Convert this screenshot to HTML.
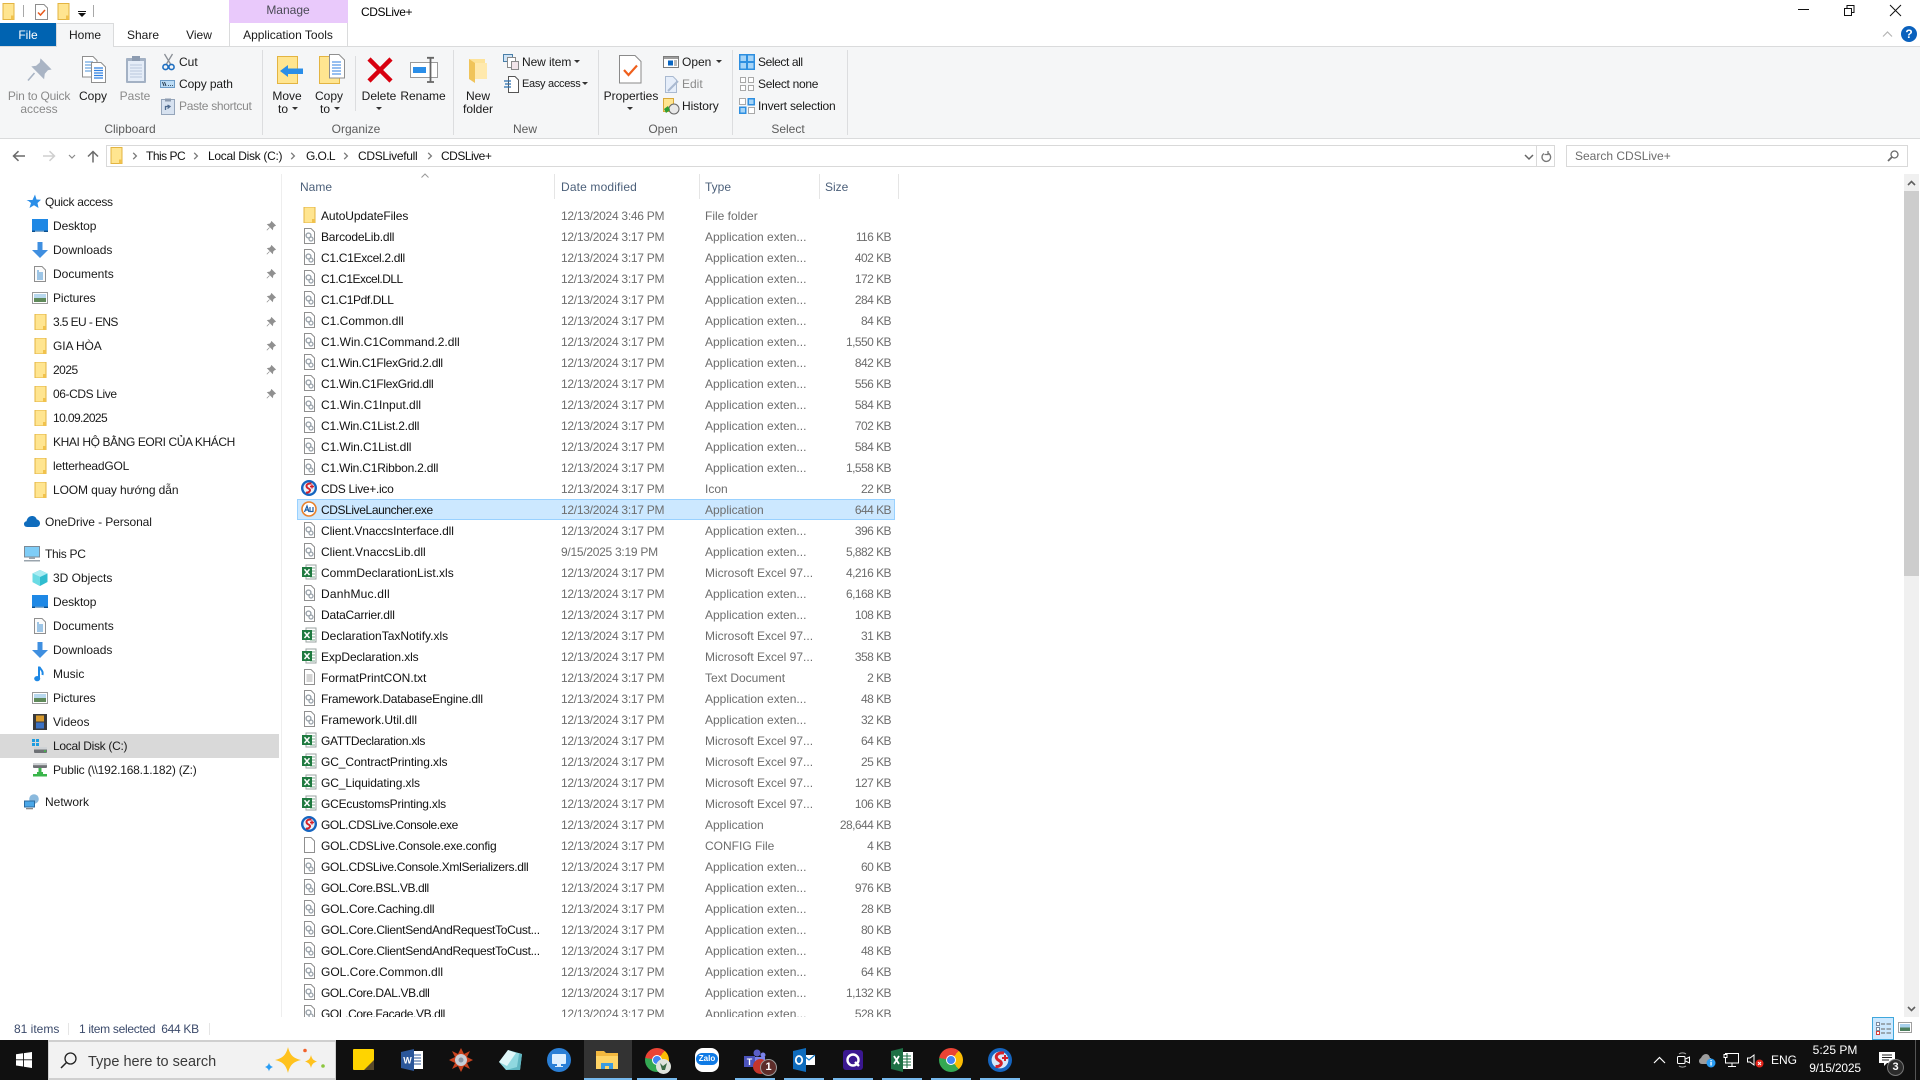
<!DOCTYPE html>
<html lang="en"><head><meta charset="utf-8"><title>CDSLive+</title>
<style>
*{box-sizing:border-box}
html,body{margin:0;padding:0;width:1920px;height:1080px;overflow:hidden;background:#fff;font:12px "Liberation Sans","Noto Sans CJK SC",sans-serif;color:#1a1a1a}
.t{position:absolute;white-space:nowrap;line-height:16px;height:16px}
.c{transform:translateX(-50%)}
.g{color:#8a8a8a}
.a{position:absolute}
.l{color:#5c5c5c}
svg{position:absolute;overflow:visible}
#rows{position:absolute;left:297px;top:205px;width:598px;height:812px;overflow:hidden}
.r{position:relative;height:21px;line-height:21px;white-space:nowrap}
.r.sel{background:#cce8ff;box-shadow:inset 0 0 0 1px #99d1ff}
.r svg{left:4px;top:2px;width:16px;height:16px}
.r span{position:absolute;top:1px;color:#6d6d6d}
.r .n{left:24px;color:#111}
.r .d{left:264px;letter-spacing:-.27px}
.r .y{left:408px}
.r .z{right:4px;letter-spacing:-.55px}
.nv{position:absolute;left:53px;line-height:16px;height:16px;white-space:nowrap;color:#1a1a1a}
.nv.root{left:45px}
.hs{position:absolute;top:174px;width:1px;height:25px;background:#e5e5e5}
.sep{position:absolute;width:1px;background:#dcdddf}
.ub{position:absolute;top:1078px;height:2px;background:#76b9ed}
.tb{position:absolute;top:1048px;width:24px;height:24px}
.s1{letter-spacing:-.1px}.s2{letter-spacing:-.2px}.s3{letter-spacing:-.3px}.s4{letter-spacing:-.4px}.s5{letter-spacing:-.5px}.s6{letter-spacing:-.6px}.s7{letter-spacing:-.7px}.p2{letter-spacing:.2px}
</style></head><body>
<svg width="0" height="0" style="position:absolute">
<defs>
<symbol id="fold" viewBox="0 0 16 16"><rect x="3" y="0" width="11" height="16" fill="#ffe590" stroke="#e3b441"/><rect x="11" y="12" width="3" height="4" fill="#f1c24d"/></symbol>
<symbol id="dll" viewBox="0 0 16 16"><path d="M3.500.5H10L13.500 4V15.500H3.500Z" fill="#fff" stroke="#8f8f8f"/><circle cx="7.500" cy="7.500" r="2.400" fill="none" stroke="#9aa3ab" stroke-width="1.400"/><circle cx="10" cy="11" r="2" fill="none" stroke="#9aa3ab" stroke-width="1.300"/></symbol>
<symbol id="xls" viewBox="0 0 16 16"><rect x="5" y="1" width="10" height="14" fill="#fff" stroke="#9aa3a0"/><path d="M9 4h5M9 7h5M9 10h5M9 13h5" stroke="#7fae90"/><rect x="1" y="3" width="10" height="10" fill="#1f7a40"/><path d="M3.500 5.200 8.500 11M8.500 5.200 3.500 11" stroke="#fff" stroke-width="1.500"/></symbol>
<symbol id="txt" viewBox="0 0 16 16"><path d="M3.500.5H10L13.500 4V15.500H3.500Z" fill="#fff" stroke="#8f8f8f"/><path d="M5.500 6h6M5.500 8h6M5.500 10h6M5.500 12h6" stroke="#aaa"/></symbol>
<symbol id="blank" viewBox="0 0 16 16"><path d="M3.500.5H10L13.500 4V15.500H3.500Z" fill="#fff" stroke="#8f8f8f"/></symbol>
<symbol id="cds" viewBox="0 0 16 16"><circle cx="8" cy="8" r="8" fill="#1565c0"/><circle cx="8" cy="8" r="5.600" fill="#e9f2fb"/><path d="M10.500 3.500C5 3 4 7 7.500 8.500S8 13 5 12.500" fill="none" stroke="#d3222a" stroke-width="2"/><path d="M11 4.500v4M9 6.500h4" stroke="#d3222a" stroke-width="1.400"/></symbol>
<symbol id="pin" viewBox="0 0 10 10"><path d="M5.500.5 9.500 4.500 8.300 5 7 6.200 6.600 8.500 1.500 3.400 3.800 3 5 1.700ZM3.500 6.500 .8 9.200" fill="#909090" stroke="#909090" stroke-width=".7"/></symbol>
<symbol id="desk" viewBox="0 0 16 16"><rect x="0" y="1" width="16" height="13" fill="#1e88e5"/><rect x="0" y="12.600" width="16" height="1.400" fill="#0d4f8c"/><rect x="3" y="12.800" width="9" height=".8" fill="#d8ecfb"/></symbol>
<symbol id="down" viewBox="0 0 16 16"><path d="M5.500 0h5v8H16l-8 8-8-8h5.500Z" fill="#3f8fe0"/></symbol>
<symbol id="docs" viewBox="0 0 16 16"><path d="M2.500.5H10L13.500 4V15.500H2.500Z" fill="#fbfbfb" stroke="#8f8f8f"/><path d="M5 5h2M5 7h6M5 9h6M5 11h6M5 13h6" stroke="#3f8fd0"/></symbol>
<symbol id="pics" viewBox="0 0 16 16"><rect x=".5" y="2.500" width="15" height="11" fill="#fff" stroke="#9a9a9a"/><rect x="2" y="4" width="12" height="4" fill="#b8d8ee"/><rect x="2" y="8" width="12" height="4" fill="#5f8a5a"/></symbol>
<symbol id="music" viewBox="0 0 16 16"><path d="M7 .5V12" stroke="#1e88e5" stroke-width="2"/><ellipse cx="5.200" cy="12.600" rx="3" ry="2.600" fill="#1e88e5"/><path d="M7.500 1c1 3 4 3.500 3 8" fill="none" stroke="#1e88e5" stroke-width="2"/></symbol>
<symbol id="chev" viewBox="0 0 6 8"><path d="M1.200.8 4.400 4 1.200 7.200" fill="none" stroke="#7a7a7a" stroke-width="1.300"/></symbol>
</defs></svg>

<!-- title bar -->
<svg style="left:0;top:3px" width="16" height="17"><use href="#fold" width="16" height="17"/></svg>
<div class="a" style="left:23px;top:5px;width:1px;height:12px;background:#a8a8a8"></div>
<svg style="left:35px;top:4px" width="13" height="16" viewBox="0 0 13 16"><path d="M.5.500H9L12.500 4V15.500H.5Z" fill="#fff" stroke="#8e8e8e"/><path d="M3 8.500 5.500 11 10 6" fill="none" stroke="#e8591c" stroke-width="1.500"/></svg>
<svg style="left:55px;top:3px" width="16" height="17"><use href="#fold" width="16" height="17"/></svg>
<div class="a" style="left:78px;top:11px;width:8px;height:1px;background:#111"></div>
<div class="a" style="left:78px;top:13px;width:0;height:0;border:4px solid transparent;border-top:4px solid #111;border-bottom:0"></div>
<div class="a" style="left:93px;top:5px;width:1px;height:12px;background:#a8a8a8"></div>
<div class="a" style="left:229px;top:0;width:119px;height:23px;background:#e9c9fb"></div>
<div class="t c" style="left:288px;top:2px;color:#4a4a55">Manage</div>
<div class="t s4" style="left:361px;top:4px;color:#000">CDSLive+</div>
<svg style="left:1798px;top:9px" width="12" height="2"><rect width="11" height="1" fill="#111"/></svg>
<svg style="left:1844px;top:5px" width="12" height="12"><path d="M.5 3.500H7.500V10.500H.5ZM3 3V.5H10V7.500H7.500" fill="none" stroke="#111"/></svg>
<svg style="left:1889px;top:4px" width="13" height="13"><path d="M1 1 12 12M12 1 1 12" stroke="#111" stroke-width="1"/></svg>

<!-- tabs -->
<div class="a" style="left:0;top:23px;width:56px;height:23px;background:#0063b1"></div>
<div class="t c" style="left:28px;top:27px;color:#fff">File</div>
<div class="a" style="left:56px;top:23px;width:58px;height:24px;background:#f5f6f7;border:1px solid #dadbdc;border-bottom:0;z-index:2"></div>
<div class="t c" style="left:85px;top:27px;z-index:3">Home</div>
<div class="t c" style="left:143px;top:27px">Share</div>
<div class="t c" style="left:199px;top:27px">View</div>
<div class="a" style="left:229px;top:23px;width:119px;height:24px;background:#fff;border:1px solid #dadbdc;border-top:0;border-bottom:0"></div>
<div class="t c" style="left:288px;top:27px">Application Tools</div>
<svg style="left:1882px;top:31px" width="11" height="6"><path d="M1 5.500 5.500 1 10 5.500" fill="none" stroke="#b5b5b5" stroke-width="1.200"/></svg>
<div class="a" style="left:1901px;top:26px;width:16px;height:16px;border-radius:50%;background:#0a61bd;color:#fff;font:bold 12px/16px 'Liberation Sans',sans-serif;text-align:center">?</div>

<!-- ribbon -->
<div class="a" style="left:0;top:46px;width:1920px;height:93px;background:#f5f6f7;border-top:1px solid #dadbdc;border-bottom:1px solid #dadbdc;z-index:1"></div>
<div id="rb" style="position:absolute;left:0;top:0;z-index:4">
<div class="sep" style="left:262px;top:50px;height:85px"></div>
<div class="sep" style="left:453px;top:50px;height:85px"></div>
<div class="sep" style="left:598px;top:50px;height:85px"></div>
<div class="sep" style="left:732px;top:50px;height:85px"></div>
<div class="sep" style="left:847px;top:50px;height:85px"></div>
<div class="sep" style="left:355px;top:56px;height:55px"></div>

<svg style="left:27px;top:59px" width="24" height="23" viewBox="0 0 24 23"><path d="M14 1 23 10 20.500 10.500 17 14.500 16.500 18.500 6 8 9.500 7.500 13.500 4ZM7.500 14 1 21.500" fill="#a9b4c4" stroke="#a9b4c4" stroke-width="1.600"/></svg>
<div class="t c g s2" style="left:39px;top:88px">Pin to Quick</div>
<div class="t c g" style="left:39px;top:101px">access</div>

<svg style="left:81px;top:55px" width="26" height="29" viewBox="0 0 26 29"><path d="M1.500 1.500H12L16 5.500V22H1.500Z" fill="#fff" stroke="#8f8f8f"/><path d="M4 7h8M4 10h8M4 13h8M4 16h8" stroke="#4a90d9"/><path d="M10.500 7.500H20L24.500 12V27.500H10.500Z" fill="#fff" stroke="#8f8f8f"/><path d="M13 13h9M13 15.500h9M13 18h9M13 20.500h9M13 23h9" stroke="#2f7fe0" stroke-width="1.300"/></svg>
<div class="t c" style="left:93px;top:88px">Copy</div>

<svg style="left:125px;top:54px" width="22" height="30" viewBox="0 0 22 30"><rect x="1" y="4" width="20" height="25" rx="1" fill="#a3b1c4"/><rect x="3" y="7" width="16" height="20" fill="#e5edf8"/><path d="M5 11h12M5 14h12M5 17h12M5 20h12M5 23h12" stroke="#b9c8dd"/><rect x="7" y="2" width="8" height="5" fill="#8d9cb1"/></svg>
<div class="t c g" style="left:135px;top:88px">Paste</div>

<svg style="left:162px;top:53px" width="13" height="18" viewBox="0 0 13 18"><path d="M2.500 1 8.500 11M10.500 1 4.500 11" stroke="#8a8f96" stroke-width="1.300"/><circle cx="3.500" cy="14" r="2.600" fill="none" stroke="#1f6fc0" stroke-width="1.600"/><circle cx="9.500" cy="14" r="2.600" fill="none" stroke="#1f6fc0" stroke-width="1.600"/></svg>
<div class="t" style="left:179px;top:54px">Cut</div>
<svg style="left:160px;top:80px" width="15" height="8" viewBox="0 0 15 8"><rect x=".5" y=".5" width="14" height="7" fill="#bcdcf5" stroke="#6c9bc6"/><path d="M2.500 2 4 6M4.500 2 6 6M8 5.500h.8M10 5.500h.8M12 5.500h.8" stroke="#22384d"/></svg>
<div class="t s1" style="left:179px;top:76px">Copy path</div>
<svg style="left:161px;top:98px" width="14" height="17" viewBox="0 0 14 17"><rect x=".5" y="1.500" width="13" height="15" fill="#d7e2f0" stroke="#95a5ba"/><rect x="4" y=".5" width="6" height="3" fill="#8d9cb1"/><path d="M4.500 12V8.500H8M6.500 7 9 8.500 6.500 10.500" fill="none" stroke="#4f6b8f" stroke-width="1.300"/></svg>
<div class="t g s3" style="left:179px;top:98px">Paste shortcut</div>
<div class="t c l" style="left:130px;top:121px">Clipboard</div>

<svg style="left:277px;top:56px" width="27" height="28" viewBox="0 0 27 28"><rect x=".5" y=".5" width="20" height="27" fill="#ffe590" stroke="#e3b441"/><path d="M11 21 3 15 11 9V12.500H26V18H11Z" fill="#2a8ee8"/></svg>
<div class="t c" style="left:287px;top:88px">Move</div>
<div class="t" style="left:278px;top:101px">to</div>
<div class="a" style="left:292px;top:107px;border:3px solid transparent;border-top:3px solid #333;border-bottom:0"></div>

<svg style="left:319px;top:54px" width="27" height="30" viewBox="0 0 27 30"><rect x=".5" y="2.500" width="20" height="27" fill="#ffe590" stroke="#e3b441"/><path d="M10.500.5H20L25.500 6V24H10.500Z" fill="#fff" stroke="#8f8f8f"/><path d="M13 8h9M13 11h9M13 14h9M13 17h9M13 20h9" stroke="#2f7fe0"/></svg>
<div class="t c" style="left:329px;top:88px">Copy</div>
<div class="t" style="left:320px;top:101px">to</div>
<div class="a" style="left:334px;top:107px;border:3px solid transparent;border-top:3px solid #333;border-bottom:0"></div>

<svg style="left:367px;top:57px" width="26" height="26" viewBox="0 0 26 26"><path d="M2 2 24 24M24 2 2 24" stroke="#d8000f" stroke-width="4.500"/></svg>
<div class="t c" style="left:379px;top:88px">Delete</div>
<div class="a" style="left:376px;top:107px;border:3px solid transparent;border-top:3px solid #333;border-bottom:0"></div>

<svg style="left:410px;top:57px" width="28" height="26" viewBox="0 0 28 26"><rect x=".5" y="5.500" width="27" height="15" fill="#fff" stroke="#9a9a9a"/><rect x="3" y="10" width="13" height="6" fill="#2a8ee8"/><path d="M17 .8h7M17 25h7M20.500 1V25" stroke="#666" stroke-width="1.800"/></svg>
<div class="t c" style="left:423px;top:88px">Rename</div>
<div class="t c l" style="left:356px;top:121px">Organize</div>

<svg style="left:467px;top:58px" width="22" height="26" viewBox="0 0 22 26"><path d="M2 1H18V21H2Z" fill="#fde39a"/><path d="M2 1 8 5V25L2 21Z" fill="#f0c45a"/><path d="M8 5H20V21H8Z" fill="#ffe9ad"/></svg>
<div class="t c" style="left:478px;top:88px">New</div>
<div class="t c" style="left:478px;top:101px">folder</div>
<svg style="left:503px;top:54px" width="16" height="16" viewBox="0 0 16 16"><rect x=".5" y=".5" width="9" height="7" fill="#cfe3f5" stroke="#4a7fa8"/><rect x="4.500" y="3.500" width="8" height="10" fill="#fff" stroke="#8a8a8a"/><rect x="8.500" y="7.500" width="7" height="8" fill="#f2e5ea" stroke="#8a8a8a"/></svg>
<div class="t s1" style="left:522px;top:54px">New item</div>
<div class="a" style="left:574px;top:60px;border:3px solid transparent;border-top:3px solid #333;border-bottom:0"></div>
<svg style="left:503px;top:76px" width="16" height="17" viewBox="0 0 16 17"><path d="M5.500.5H12L15.500 4V16.500H5.500Z" fill="#fff" stroke="#555"/><path d="M1 5h7M2 8h6M1 11h7" stroke="#2a6fb0" stroke-width="1.200"/></svg>
<div class="t" style="left:522px;top:76px;font-size:11px;letter-spacing:-.3px">Easy access</div>
<div class="a" style="left:582px;top:82px;border:3px solid transparent;border-top:3px solid #333;border-bottom:0"></div>
<div class="t c l" style="left:525px;top:121px">New</div>

<svg style="left:619px;top:55px" width="23" height="29" viewBox="0 0 23 29"><path d="M.5.500H16L22 6.500V28H.5Z" fill="#fff" stroke="#8a8a8a"/><path d="M5 15 9.500 20 18 10.500" fill="none" stroke="#ef5f1c" stroke-width="2.200"/></svg>
<div class="t c" style="left:631px;top:88px">Properties</div>
<div class="a" style="left:627px;top:107px;border:3px solid transparent;border-top:3px solid #333;border-bottom:0"></div>
<svg style="left:663px;top:56px" width="16" height="12" viewBox="0 0 16 12"><rect x=".5" y=".5" width="15" height="11" fill="#fff" stroke="#7c7c7c"/><rect x="1" y="1" width="14" height="2" fill="#9d9d9d"/><rect x="5" y="4.500" width="5" height="5" fill="#0a66c2"/><path d="M11 5h3M11 7h3M11 9h3" stroke="#777"/></svg>
<div class="t" style="left:682px;top:54px">Open</div>
<div class="a" style="left:716px;top:60px;border:3px solid transparent;border-top:3px solid #333;border-bottom:0"></div>
<svg style="left:665px;top:76px" width="15" height="17" viewBox="0 0 15 17"><path d="M.5.500H8L11.500 4V16.500H.5Z" fill="#e6eefa" stroke="#a9b9d0"/><path d="M3 15 13 5" stroke="#a9b9d0" stroke-width="2"/></svg>
<div class="t g" style="left:682px;top:76px">Edit</div>
<svg style="left:663px;top:98px" width="16" height="16" viewBox="0 0 16 16"><rect x=".5" y=".5" width="10" height="13" fill="#ffe590" stroke="#d9a93a"/><circle cx="11" cy="11" r="5" fill="#e8e8e8" stroke="#666"/><path d="M1 11 5 8 7 12 3 15Z" fill="#2f9e32"/></svg>
<div class="t s1" style="left:682px;top:98px">History</div>
<div class="t c l" style="left:663px;top:121px">Open</div>

<svg style="left:739px;top:54px" width="16" height="16" viewBox="0 0 16 16"><rect width="16" height="16" fill="#2e8fe0"/><rect x="1.500" y="1.500" width="5.500" height="5.500" fill="#a6d4f7"/><rect x="9" y="1.500" width="5.500" height="5.500" fill="#a6d4f7"/><rect x="1.500" y="9" width="5.500" height="5.500" fill="#a6d4f7"/><rect x="9" y="9" width="5.500" height="5.500" fill="#a6d4f7"/></svg>
<div class="t s4" style="left:758px;top:54px">Select all</div>
<svg style="left:740px;top:77px" width="14" height="14" viewBox="0 0 14 14"><path d="M.5.500H5.500V5.500H.5ZM8.500.500H13.500V5.500H8.500ZM.5 8.500H5.500V13.500H.5ZM8.500 8.500H13.500V13.500H8.500Z" fill="#fff" stroke="#a8a8a8"/></svg>
<div class="t s3" style="left:758px;top:76px">Select none</div>
<svg style="left:739px;top:98px" width="16" height="16" viewBox="0 0 16 16"><path d="M.5.500H6.500V6.500H.5ZM9.500 9.500H15.500V15.500H9.500Z" fill="#fff" stroke="#a8a8a8"/><path d="M8.500 0H16V7.500H8.500ZM0 8.500H7.500V16H0Z" fill="#2e8fe0"/><path d="M10 1.500H14.500V6H10ZM1.500 10H6V14.500H1.500Z" fill="#a6d4f7"/></svg>
<div class="t s2" style="left:758px;top:98px">Invert selection</div>
<div class="t c l" style="left:788px;top:121px">Select</div>
</div>

<!-- address bar -->
<svg style="left:12px;top:150px" width="14" height="12" viewBox="0 0 14 12"><path d="M13 6H2M6.500 1.200 1.500 6 6.500 10.800" fill="none" stroke="#6a6a6a" stroke-width="1.500"/></svg>
<svg style="left:42px;top:150px" width="14" height="12" viewBox="0 0 14 12"><path d="M1 6H12M7.500 1.200 12.500 6 7.500 10.800" fill="none" stroke="#cfcfcf" stroke-width="1.500"/></svg>
<svg style="left:68px;top:154px" width="8" height="5" viewBox="0 0 8 5"><path d="M1 1 4 4 7 1" fill="none" stroke="#8a8a8a" stroke-width="1.200"/></svg>
<svg style="left:87px;top:150px" width="12" height="13" viewBox="0 0 12 13"><path d="M6 12.500V2M1 6.500 6 1.500 11 6.500" fill="none" stroke="#6a6a6a" stroke-width="1.500"/></svg>
<div class="a" style="left:106px;top:145px;width:1449px;height:22px;border:1px solid #d9d9d9"></div>
<svg style="left:108px;top:147px" width="16" height="17"><use href="#fold" width="16" height="17"/></svg>
<svg style="left:132px;top:152px" width="6" height="8"><use href="#chev" width="6" height="8"/></svg>
<div class="t s5" style="left:146px;top:148px;color:#111">This PC</div>
<svg style="left:193px;top:152px" width="6" height="8"><use href="#chev" width="6" height="8"/></svg>
<div class="t s3" style="left:208px;top:148px;color:#111">Local Disk (C:)</div>
<svg style="left:290px;top:152px" width="6" height="8"><use href="#chev" width="6" height="8"/></svg>
<div class="t s6" style="left:306px;top:148px;color:#111">G.O.L</div>
<svg style="left:343px;top:152px" width="6" height="8"><use href="#chev" width="6" height="8"/></svg>
<div class="t s3" style="left:358px;top:148px;color:#111">CDSLivefull</div>
<svg style="left:427px;top:152px" width="6" height="8"><use href="#chev" width="6" height="8"/></svg>
<div class="t s5" style="left:441px;top:148px;color:#111">CDSLive+</div>
<svg style="left:1524px;top:154px" width="10" height="6" viewBox="0 0 10 6"><path d="M1 1 5 5 9 1" fill="none" stroke="#666" stroke-width="1.500"/></svg>
<div class="a" style="left:1536px;top:145px;width:1px;height:22px;background:#d9d9d9"></div>
<svg style="left:1541px;top:150px" width="11" height="12" viewBox="0 0 11 12"><path d="M3.500 3A4.300 4.300 0 1 0 7 2.500M7.500.5V4H4" fill="none" stroke="#777" stroke-width="1.300" transform="translate(-.5 .5)"/></svg>
<div class="a" style="left:1566px;top:145px;width:342px;height:22px;border:1px solid #d9d9d9"></div>
<div class="t" style="left:1575px;top:148px;color:#6d6d6d">Search CDSLive+</div>
<svg style="left:1887px;top:150px" width="12" height="12" viewBox="0 0 12 12"><circle cx="7.500" cy="4.500" r="3.500" fill="none" stroke="#6a6a6a" stroke-width="1.300"/><path d="M5 7 1 11" stroke="#6a6a6a" stroke-width="1.800"/></svg>

<!-- nav pane -->
<div class="a" style="left:281px;top:174px;width:1px;height:843px;background:#eeeeee"></div>
<div class="a" style="left:0;top:734px;width:279px;height:24px;background:#d9d9d9"></div>
<svg style="left:26px;top:194px" width="15" height="15" viewBox="0 0 15 15"><path d="M9 .5 10.500 5.500 15 5.800 11.500 9 12.500 14 8 11.200 3.500 14 5 9 2.500 7 .5 6H6.500Z" fill="#2a8ee8"/></svg>
<div class="nv root s3" style="top:194px">Quick access</div>
<svg style="left:32px;top:218px" width="16" height="16"><use href="#desk" width="16" height="16"/></svg><div class="nv s1" style="top:218px">Desktop</div>
<svg style="left:32px;top:242px" width="16" height="16"><use href="#down" width="16" height="16"/></svg><div class="nv" style="top:242px">Downloads</div>
<svg style="left:32px;top:266px" width="16" height="16"><use href="#docs" width="16" height="16"/></svg><div class="nv" style="top:266px">Documents</div>
<svg style="left:32px;top:290px" width="16" height="16"><use href="#pics" width="16" height="16"/></svg><div class="nv s1" style="top:290px">Pictures</div>
<svg style="left:32px;top:314px" width="16" height="16"><use href="#fold" width="16" height="16"/></svg><div class="nv s6" style="top:314px">3.5 EU - ENS</div>
<svg style="left:32px;top:338px" width="16" height="16"><use href="#fold" width="16" height="16"/></svg><div class="nv s1" style="top:338px">GIA HÒA</div>
<svg style="left:32px;top:362px" width="16" height="16"><use href="#fold" width="16" height="16"/></svg><div class="nv s5" style="top:362px">2025</div>
<svg style="left:32px;top:386px" width="16" height="16"><use href="#fold" width="16" height="16"/></svg><div class="nv s4" style="top:386px">06-CDS Live</div>
<svg style="left:32px;top:410px" width="16" height="16"><use href="#fold" width="16" height="16"/></svg><div class="nv s6" style="top:410px">10.09.2025</div>
<svg style="left:32px;top:434px" width="16" height="16"><use href="#fold" width="16" height="16"/></svg><div class="nv s4" style="top:434px">KHAI HỘ BẰNG EORI CỦA KHÁCH</div>
<svg style="left:32px;top:458px" width="16" height="16"><use href="#fold" width="16" height="16"/></svg><div class="nv s2" style="top:458px">letterheadGOL</div>
<svg style="left:32px;top:482px" width="16" height="16"><use href="#fold" width="16" height="16"/></svg><div class="nv s1" style="top:482px">LOOM quay hướng dẫn</div>
<svg style="left:266px;top:221px" width="10" height="10"><use href="#pin" width="10" height="10"/></svg>
<svg style="left:266px;top:245px" width="10" height="10"><use href="#pin" width="10" height="10"/></svg>
<svg style="left:266px;top:269px" width="10" height="10"><use href="#pin" width="10" height="10"/></svg>
<svg style="left:266px;top:293px" width="10" height="10"><use href="#pin" width="10" height="10"/></svg>
<svg style="left:266px;top:317px" width="10" height="10"><use href="#pin" width="10" height="10"/></svg>
<svg style="left:266px;top:341px" width="10" height="10"><use href="#pin" width="10" height="10"/></svg>
<svg style="left:266px;top:365px" width="10" height="10"><use href="#pin" width="10" height="10"/></svg>
<svg style="left:266px;top:389px" width="10" height="10"><use href="#pin" width="10" height="10"/></svg>
<svg style="left:24px;top:516px" width="16" height="11" viewBox="0 0 16 11"><path d="M3.500 11C1 11 0 9.500 0 8S1.200 5.500 2.500 5.300C3 2 5.500 0 8 0s4 1.300 4.800 3.500C14.800 3.800 16 5.500 16 7.300 16 9.500 14.500 11 12.500 11Z" fill="#0f6cbd"/></svg>
<div class="nv root s1" style="top:514px">OneDrive - Personal</div>
<svg style="left:24px;top:546px" width="16" height="16" viewBox="0 0 16 16"><rect x=".5" y=".5" width="15" height="10.500" fill="#7fcdf7" stroke="#7c8a96"/><rect x="5" y="11" width="6" height="2" fill="#9aa4ad"/><rect x="0" y="14" width="16" height="1.500" fill="#9aa4ad"/></svg>
<div class="nv root s3" style="top:546px">This PC</div>
<svg style="left:32px;top:570px" width="16" height="16" viewBox="0 0 16 16"><path d="M8 0 15.500 3.500V12L8 16 .5 12V3.500Z" fill="#2fbccf"/><path d="M8 0 15.500 3.500 8 7 .5 3.500Z" fill="#a9ecf2"/><path d="M8 7V16L.5 12V3.500Z" fill="#6adbe4"/></svg><div class="nv" style="top:570px">3D Objects</div>
<svg style="left:32px;top:594px" width="16" height="16"><use href="#desk" width="16" height="16"/></svg><div class="nv s1" style="top:594px">Desktop</div>
<svg style="left:32px;top:618px" width="16" height="16"><use href="#docs" width="16" height="16"/></svg><div class="nv" style="top:618px">Documents</div>
<svg style="left:32px;top:642px" width="16" height="16"><use href="#down" width="16" height="16"/></svg><div class="nv" style="top:642px">Downloads</div>
<svg style="left:32px;top:666px" width="16" height="16"><use href="#music" width="16" height="16"/></svg><div class="nv" style="top:666px">Music</div>
<svg style="left:32px;top:690px" width="16" height="16"><use href="#pics" width="16" height="16"/></svg><div class="nv s1" style="top:690px">Pictures</div>
<svg style="left:33px;top:714px" width="14" height="16" viewBox="0 0 14 16"><rect width="14" height="16" fill="#3a3a3a"/><rect x="3" y="1.500" width="8" height="6" fill="#d89a2d"/><rect x="3" y="8.500" width="8" height="6" fill="#3c72c4"/></svg><div class="nv" style="top:714px">Videos</div>
<svg style="left:32px;top:738px" width="16" height="16" viewBox="0 0 16 16"><path d="M0 1h3v3H0ZM4 1h3v3H4ZM0 5h3v3H0ZM4 5h3v3H4Z" fill="#1e9de0"/><rect x="2" y="9" width="13" height="6" rx="1" fill="#6e7175"/><rect x="2" y="9" width="13" height="2.500" fill="#cfd2d5"/><rect x="12" y="12.500" width="2" height="1.200" fill="#35d03a"/></svg><div class="nv s3" style="top:738px">Local Disk (C:)</div>
<svg style="left:32px;top:762px" width="16" height="16" viewBox="0 0 16 16"><rect x="1" y="1" width="14" height="5" rx="1" fill="#6e7175"/><rect x="1" y="1" width="14" height="2.200" fill="#cfd2d5"/><path d="M6.500 6H9.500V10H6.500Z" fill="#39b54a"/><rect x="1" y="12" width="14" height="2.500" fill="#39b54a"/><rect x="5" y="10" width="6" height="3" fill="#39b54a"/></svg><div class="nv s2" style="top:762px">Public (\\192.168.1.182) (Z:)</div>
<svg style="left:24px;top:794px" width="16" height="16" viewBox="0 0 16 16"><circle cx="10" cy="5" r="4.800" fill="#8ab9dd"/><rect x=".5" y="7" width="10" height="6" fill="#4aa7e8" stroke="#2b6a9e"/><rect x="2" y="14" width="7" height="1.300" fill="#888"/></svg>
<div class="nv root" style="top:794px">Network</div>

<!-- headers -->
<div class="t" style="left:300px;top:179px;color:#4c607a">Name</div>
<svg style="left:421px;top:173px" width="8" height="5" viewBox="0 0 8 5"><path d="M.5 4.500 4 1 7.500 4.500" fill="none" stroke="#9a9a9a"/></svg>
<div class="hs" style="left:554px"></div>
<div class="t" style="left:561px;top:179px;color:#4c607a;letter-spacing:.15px">Date modified</div>
<div class="hs" style="left:699px"></div>
<div class="t" style="left:705px;top:179px;color:#4c607a">Type</div>
<div class="hs" style="left:819px"></div>
<div class="t" style="left:825px;top:179px;color:#4c607a">Size</div>
<div class="hs" style="left:898px"></div>

<!-- file rows -->
<div id="rows">
<div class="r"><svg><use href="#fold" width="16" height="16"/></svg><span class="n s1">AutoUpdateFiles</span><span class="d">12/13/2024 3:46 PM</span><span class="y">File folder</span></div>
<div class="r"><svg><use href="#dll" width="16" height="16"/></svg><span class="n s2">BarcodeLib.dll</span><span class="d">12/13/2024 3:17 PM</span><span class="y">Application exten...</span><span class="z">116 KB</span></div>
<div class="r"><svg><use href="#dll" width="16" height="16"/></svg><span class="n s3">C1.C1Excel.2.dll</span><span class="d">12/13/2024 3:17 PM</span><span class="y">Application exten...</span><span class="z">402 KB</span></div>
<div class="r"><svg><use href="#dll" width="16" height="16"/></svg><span class="n s5">C1.C1Excel.DLL</span><span class="d">12/13/2024 3:17 PM</span><span class="y">Application exten...</span><span class="z">172 KB</span></div>
<div class="r"><svg><use href="#dll" width="16" height="16"/></svg><span class="n s4">C1.C1Pdf.DLL</span><span class="d">12/13/2024 3:17 PM</span><span class="y">Application exten...</span><span class="z">284 KB</span></div>
<div class="r"><svg><use href="#dll" width="16" height="16"/></svg><span class="n">C1.Common.dll</span><span class="d">12/13/2024 3:17 PM</span><span class="y">Application exten...</span><span class="z">84 KB</span></div>
<div class="r"><svg><use href="#dll" width="16" height="16"/></svg><span class="n">C1.Win.C1Command.2.dll</span><span class="d">12/13/2024 3:17 PM</span><span class="y">Application exten...</span><span class="z">1,550 KB</span></div>
<div class="r"><svg><use href="#dll" width="16" height="16"/></svg><span class="n s3">C1.Win.C1FlexGrid.2.dll</span><span class="d">12/13/2024 3:17 PM</span><span class="y">Application exten...</span><span class="z">842 KB</span></div>
<div class="r"><svg><use href="#dll" width="16" height="16"/></svg><span class="n s3">C1.Win.C1FlexGrid.dll</span><span class="d">12/13/2024 3:17 PM</span><span class="y">Application exten...</span><span class="z">556 KB</span></div>
<div class="r"><svg><use href="#dll" width="16" height="16"/></svg><span class="n">C1.Win.C1Input.dll</span><span class="d">12/13/2024 3:17 PM</span><span class="y">Application exten...</span><span class="z">584 KB</span></div>
<div class="r"><svg><use href="#dll" width="16" height="16"/></svg><span class="n s2">C1.Win.C1List.2.dll</span><span class="d">12/13/2024 3:17 PM</span><span class="y">Application exten...</span><span class="z">702 KB</span></div>
<div class="r"><svg><use href="#dll" width="16" height="16"/></svg><span class="n s1">C1.Win.C1List.dll</span><span class="d">12/13/2024 3:17 PM</span><span class="y">Application exten...</span><span class="z">584 KB</span></div>
<div class="r"><svg><use href="#dll" width="16" height="16"/></svg><span class="n s2">C1.Win.C1Ribbon.2.dll</span><span class="d">12/13/2024 3:17 PM</span><span class="y">Application exten...</span><span class="z">1,558 KB</span></div>
<div class="r"><svg><use href="#cds" width="16" height="16"/></svg><span class="n s3">CDS Live+.ico</span><span class="d">12/13/2024 3:17 PM</span><span class="y">Icon</span><span class="z">22 KB</span></div>
<div class="r sel"><svg viewBox="0 0 16 16"><circle cx="8" cy="8" r="7" fill="#fff" stroke="#e8802a" stroke-width="1.600"/><path d="M3.500 11 6 5 8 11M4.500 9H7.500" fill="none" stroke="#1b5ea8" stroke-width="1.200"/><path d="M9 6V10.500H12V6" fill="none" stroke="#1b5ea8" stroke-width="1.200"/></svg><span class="n s4">CDSLiveLauncher.exe</span><span class="d">12/13/2024 3:17 PM</span><span class="y">Application</span><span class="z">644 KB</span></div>
<div class="r"><svg><use href="#dll" width="16" height="16"/></svg><span class="n s1">Client.VnaccsInterface.dll</span><span class="d">12/13/2024 3:17 PM</span><span class="y">Application exten...</span><span class="z">396 KB</span></div>
<div class="r"><svg><use href="#dll" width="16" height="16"/></svg><span class="n">Client.VnaccsLib.dll</span><span class="d">9/15/2025 3:19 PM</span><span class="y">Application exten...</span><span class="z">5,882 KB</span></div>
<div class="r"><svg><use href="#xls" width="16" height="16"/></svg><span class="n">CommDeclarationList.xls</span><span class="d">12/13/2024 3:17 PM</span><span class="y">Microsoft Excel 97...</span><span class="z">4,216 KB</span></div>
<div class="r"><svg><use href="#dll" width="16" height="16"/></svg><span class="n p2">DanhMuc.dll</span><span class="d">12/13/2024 3:17 PM</span><span class="y">Application exten...</span><span class="z">6,168 KB</span></div>
<div class="r"><svg><use href="#dll" width="16" height="16"/></svg><span class="n s2">DataCarrier.dll</span><span class="d">12/13/2024 3:17 PM</span><span class="y">Application exten...</span><span class="z">108 KB</span></div>
<div class="r"><svg><use href="#xls" width="16" height="16"/></svg><span class="n">DeclarationTaxNotify.xls</span><span class="d">12/13/2024 3:17 PM</span><span class="y">Microsoft Excel 97...</span><span class="z">31 KB</span></div>
<div class="r"><svg><use href="#xls" width="16" height="16"/></svg><span class="n s1">ExpDeclaration.xls</span><span class="d">12/13/2024 3:17 PM</span><span class="y">Microsoft Excel 97...</span><span class="z">358 KB</span></div>
<div class="r"><svg><use href="#txt" width="16" height="16"/></svg><span class="n">FormatPrintCON.txt</span><span class="d">12/13/2024 3:17 PM</span><span class="y">Text Document</span><span class="z">2 KB</span></div>
<div class="r"><svg><use href="#dll" width="16" height="16"/></svg><span class="n s2">Framework.DatabaseEngine.dll</span><span class="d">12/13/2024 3:17 PM</span><span class="y">Application exten...</span><span class="z">48 KB</span></div>
<div class="r"><svg><use href="#dll" width="16" height="16"/></svg><span class="n">Framework.Util.dll</span><span class="d">12/13/2024 3:17 PM</span><span class="y">Application exten...</span><span class="z">32 KB</span></div>
<div class="r"><svg><use href="#xls" width="16" height="16"/></svg><span class="n s3">GATTDeclaration.xls</span><span class="d">12/13/2024 3:17 PM</span><span class="y">Microsoft Excel 97...</span><span class="z">64 KB</span></div>
<div class="r"><svg><use href="#xls" width="16" height="16"/></svg><span class="n s1">GC_ContractPrinting.xls</span><span class="d">12/13/2024 3:17 PM</span><span class="y">Microsoft Excel 97...</span><span class="z">25 KB</span></div>
<div class="r"><svg><use href="#xls" width="16" height="16"/></svg><span class="n s1">GC_Liquidating.xls</span><span class="d">12/13/2024 3:17 PM</span><span class="y">Microsoft Excel 97...</span><span class="z">127 KB</span></div>
<div class="r"><svg><use href="#xls" width="16" height="16"/></svg><span class="n s2">GCEcustomsPrinting.xls</span><span class="d">12/13/2024 3:17 PM</span><span class="y">Microsoft Excel 97...</span><span class="z">106 KB</span></div>
<div class="r"><svg><use href="#cds" width="16" height="16"/></svg><span class="n s4">GOL.CDSLive.Console.exe</span><span class="d">12/13/2024 3:17 PM</span><span class="y">Application</span><span class="z">28,644 KB</span></div>
<div class="r"><svg><use href="#blank" width="16" height="16"/></svg><span class="n s2">GOL.CDSLive.Console.exe.config</span><span class="d">12/13/2024 3:17 PM</span><span class="y">CONFIG File</span><span class="z">4 KB</span></div>
<div class="r"><svg><use href="#dll" width="16" height="16"/></svg><span class="n s3">GOL.CDSLive.Console.XmlSerializers.dll</span><span class="d">12/13/2024 3:17 PM</span><span class="y">Application exten...</span><span class="z">60 KB</span></div>
<div class="r"><svg><use href="#dll" width="16" height="16"/></svg><span class="n s4">GOL.Core.BSL.VB.dll</span><span class="d">12/13/2024 3:17 PM</span><span class="y">Application exten...</span><span class="z">976 KB</span></div>
<div class="r"><svg><use href="#dll" width="16" height="16"/></svg><span class="n s2">GOL.Core.Caching.dll</span><span class="d">12/13/2024 3:17 PM</span><span class="y">Application exten...</span><span class="z">28 KB</span></div>
<div class="r"><svg><use href="#dll" width="16" height="16"/></svg><span class="n s3">GOL.Core.ClientSendAndRequestToCust...</span><span class="d">12/13/2024 3:17 PM</span><span class="y">Application exten...</span><span class="z">80 KB</span></div>
<div class="r"><svg><use href="#dll" width="16" height="16"/></svg><span class="n s3">GOL.Core.ClientSendAndRequestToCust...</span><span class="d">12/13/2024 3:17 PM</span><span class="y">Application exten...</span><span class="z">48 KB</span></div>
<div class="r"><svg><use href="#dll" width="16" height="16"/></svg><span class="n">GOL.Core.Common.dll</span><span class="d">12/13/2024 3:17 PM</span><span class="y">Application exten...</span><span class="z">64 KB</span></div>
<div class="r"><svg><use href="#dll" width="16" height="16"/></svg><span class="n s4">GOL.Core.DAL.VB.dll</span><span class="d">12/13/2024 3:17 PM</span><span class="y">Application exten...</span><span class="z">1,132 KB</span></div>
<div class="r"><svg><use href="#dll" width="16" height="16"/></svg><span class="n s4">GOL.Core.Facade.VB.dll</span><span class="d">12/13/2024 3:17 PM</span><span class="y">Application exten...</span><span class="z">528 KB</span></div>
</div>

<!-- scrollbar -->
<div class="a" style="left:1904px;top:174px;width:15px;height:843px;background:#f0f0f0"></div>
<svg style="left:1907px;top:180px" width="9" height="6" viewBox="0 0 9 6"><path d="M1 5 4.500 1.500 8 5" fill="none" stroke="#606060" stroke-width="1.600"/></svg>
<div class="a" style="left:1904px;top:191px;width:15px;height:385px;background:#cdcdcd"></div>
<svg style="left:1907px;top:1006px" width="9" height="6" viewBox="0 0 9 6"><path d="M1 1 4.500 4.500 8 1" fill="none" stroke="#606060" stroke-width="1.600"/></svg>

<!-- status bar -->
<div class="t" style="left:14px;top:1021px;color:#3b4a6b">81 items</div>
<div class="a" style="left:68px;top:1023px;width:1px;height:12px;background:#e5e5e5"></div>
<div class="t s3" style="left:79px;top:1021px;color:#3b4a6b">1 item selected&nbsp; 644 KB</div>
<div class="a" style="left:209px;top:1023px;width:1px;height:12px;background:#e5e5e5"></div>
<div class="a" style="left:1872px;top:1017px;width:22px;height:23px;background:#cce8ff;border:1px solid #3fa7dc"></div>
<svg style="left:1876px;top:1022px" width="15" height="13" viewBox="0 0 15 13"><path d="M.5.500H3.500V3.500H.5Z" fill="#fff" stroke="#7a8aa0"/><path d="M.5 5.500H3.500V8.500H.5Z" fill="#fff" stroke="#7a8aa0"/><path d="M.5 9.500H3.500V12.500H.5Z" fill="#fff" stroke="#d8413a"/><path d="M5 2h4M10.500 2H15M5 7h4M10.500 7H15M5 11h4M10.500 11H15" stroke="#666"/></svg>
<svg style="left:1898px;top:1022px" width="14" height="11" viewBox="0 0 14 11"><rect x=".5" y=".5" width="13" height="10" fill="#fff" stroke="#a0a0a0"/><rect x="2" y="2" width="10" height="3.500" fill="#a9d1ec"/><rect x="2" y="5.500" width="10" height="3.500" fill="#4d7f5e"/></svg>

<!-- taskbar -->
<div class="a" style="left:0;top:1040px;width:1920px;height:40px;background:#101010"></div>
<svg style="left:16px;top:1052px" width="16" height="16" viewBox="0 0 16 16"><path d="M0 2.200 7 1.200V7.400H0ZM7.900 1.100 16 0V7.400H7.900ZM0 8.300H7V14.500L0 13.500ZM7.900 8.300H16V16L7.900 14.800Z" fill="#fff"/></svg>
<div class="a" style="left:48px;top:1040px;width:288px;height:40px;background:#f2f2f2;border:2px solid #cfcfcf;border-left-width:1px;border-right-width:1px"></div>
<svg style="left:60px;top:1052px" width="17" height="17" viewBox="0 0 17 17"><circle cx="10.500" cy="6.500" r="5.500" fill="none" stroke="#222" stroke-width="1.300"/><path d="M6.500 10.500 1 16" stroke="#222" stroke-width="1.500"/></svg>
<div class="a" style="left:88px;top:1053px;line-height:18px;font-size:14.5px;color:#3a3a3a;white-space:nowrap">Type here to search</div>
<svg style="left:264px;top:1046px" width="66" height="30" viewBox="0 0 66 30"><path d="M24 1C26 9 29 12 37 14 29 16 26 19 24 27 22 19 19 16 11 14 19 12 22 9 24 1Z" fill="#ffc21e"/><path d="M47 9C48 13 49 14 53 15.500 49 17 48 18 47 22 46 18 45 17 41 15.500 45 14 46 13 47 9Z" fill="#ffc21e"/><path d="M5 16.500C5.500 19 6.500 20 9 21 6.500 22 5.500 23 5 25.500 4.500 23 3.500 22 1 21 3.500 20 4.500 19 5 16.500Z" fill="#2a9df4"/><circle cx="41" cy="4.500" r="1.800" fill="#f2622b"/><circle cx="59" cy="20" r="1.800" fill="#8cc63f"/></svg>

<div class="a" style="left:584px;top:1040px;width:48px;height:40px;background:#333"></div>
<svg class="tb" style="left:352px" viewBox="0 0 24 24"><rect x="1" y="1" width="21" height="21" rx="1" fill="#ffd400"/><path d="M22 12V22H12Z" fill="#5a4a2a"/></svg>
<svg class="tb" style="left:400px" viewBox="0 0 24 24"><rect x="9" y="3" width="14" height="18" fill="#fff"/><path d="M12 7h9M12 10h9M12 13h9M12 16h9" stroke="#2b579a"/><path d="M1 4 14 1V23L1 20Z" fill="#2b579a"/><text x="7.500" y="15.500" font-size="9" font-weight="bold" fill="#fff" text-anchor="middle" font-family="Liberation Sans">W</text></svg>
<svg class="tb" style="left:449px" viewBox="0 0 24 24"><path d="M12 0 15 6 21 3 18 9 24 12 18 15 21 21 15 18 12 24 9 18 3 21 6 15 0 12 6 9 3 3 9 6Z" fill="#c9421e"/><circle cx="12" cy="12" r="6" fill="#c8ced6"/><circle cx="12" cy="12" r="2.500" fill="#8a95a3"/></svg>
<svg class="tb" style="left:498px" viewBox="0 0 24 24"><path d="M1 14 10 2 24 6 22 22 8 22Z" fill="#8fd8df"/><path d="M1 14 10 2 18 5 9 18Z" fill="#dff6f8"/><path d="M8 22 22 22 24 6 21 6 19 19Z" fill="#5fb7c2"/></svg>
<svg class="tb" style="left:547px" viewBox="0 0 24 24"><circle cx="12" cy="12" r="12" fill="#2a7fd6"/><rect x="5" y="6" width="14" height="10" rx="1" fill="#dff0ff"/><path d="M10 16H14V18H16V19H8V18H10Z" fill="#dff0ff"/></svg>
<svg class="tb" style="left:595px" viewBox="0 0 24 24"><path d="M1 3H9L11 5H23V21H1Z" fill="#f3b83f"/><path d="M1 8H23V21H1Z" fill="#ffd466"/><rect x="6" y="15" width="12" height="6" fill="#3c9be0"/><rect x="10" y="18" width="4" height="3" fill="#ffd466"/></svg>
<div class="a" style="left:645px;top:1048px;width:24px;height:24px;border-radius:50%;background:conic-gradient(from 40deg,#fbbc04 0 100deg,#34a853 100deg 240deg,#ea4335 240deg 360deg)"></div><div class="a" style="left:652px;top:1055px;width:10px;height:10px;border-radius:50%;background:#4285f4;border:1px solid #fff"></div><div class="a" style="left:656px;top:1059px;width:15px;height:15px;border-radius:50%;background:#dfe3dc"></div><svg style="left:659px;top:1062px" width="9" height="9" viewBox="0 0 9 9"><path d="M1 1 4 4 8 1 6 8H3Z" fill="#3b6b46"/></svg>
<div class="a" style="left:695px;top:1048px;width:24px;height:24px;border-radius:8px;background:#fff"></div><div class="a" style="left:696px;top:1053px;width:22px;height:12px;background:#0f7ae5;border-radius:6px;color:#fff;font:bold 8px/12px 'Liberation Sans',sans-serif;text-align:center">Zalo</div>
<svg class="tb" style="left:743px" viewBox="0 0 24 24"><circle cx="14" cy="5" r="3.500" fill="#5b5fc7"/><circle cx="20" cy="7" r="2.500" fill="#7b83eb"/><path d="M8 9H22V17H8Z" fill="#7b83eb"/><rect x="1" y="8" width="11" height="11" fill="#4b53bc"/><text x="6.500" y="17" font-size="9" font-weight="bold" fill="#fff" text-anchor="middle" font-family="Liberation Sans">T</text></svg>
<div class="a" style="left:753px;top:1059px;width:15px;height:15px;border-radius:50%;background:#c4352c"></div>
<div class="a" style="left:760px;top:1059px;width:17px;height:17px;border-radius:50%;background:#5e2d2a;border:1px solid #9a9a9a;color:#fff;font:bold 11px/15px 'Liberation Sans',sans-serif;text-align:center">1</div>
<svg class="tb" style="left:792px" viewBox="0 0 24 24"><rect x="11" y="7" width="12" height="10" fill="#fff"/><path d="M11 7 17 12 23 7" fill="none" stroke="#0f78c8" stroke-width="1.200"/><path d="M1 3 14 0V24L1 21Z" fill="#0f6cbd"/><ellipse cx="7" cy="12" rx="3.200" ry="4" fill="none" stroke="#fff" stroke-width="1.800"/></svg>
<svg class="tb" style="left:841px" viewBox="0 0 24 24"><rect x="2" y="2" width="20" height="20" rx="3" fill="#3a1790"/><circle cx="12" cy="12" r="5.500" fill="none" stroke="#fff" stroke-width="2.400"/><path d="M14 14 18 18" stroke="#fff" stroke-width="2.400"/></svg>
<svg class="tb" style="left:890px" viewBox="0 0 24 24"><rect x="11" y="4" width="12" height="17" fill="#fff"/><path d="M13 8h8M13 11h8M13 14h8M13 17h8M17 5V20" stroke="#1e7145"/><path d="M1 3 13 0V24L1 21Z" fill="#1e7145"/><path d="M4 8 9 16M9 8 4 16" stroke="#fff" stroke-width="1.800"/></svg>
<div class="a" style="left:939px;top:1048px;width:24px;height:24px;border-radius:50%;background:conic-gradient(from 40deg,#fbbc04 0 100deg,#34a853 100deg 240deg,#ea4335 240deg 360deg)"></div><div class="a" style="left:946px;top:1055px;width:10px;height:10px;border-radius:50%;background:#4285f4;border:1px solid #fff"></div>
<svg class="tb" style="left:988px" viewBox="0 0 24 24"><circle cx="12" cy="12" r="12" fill="#1565c0"/><circle cx="12" cy="12" r="8.400" fill="#d6e8fa"/><path d="M16 5C8 4 6 10 11 12.500S12 19 7.500 18.500" fill="none" stroke="#d3222a" stroke-width="3"/><path d="M17 7v6M14 10h6" stroke="#d3222a" stroke-width="2"/></svg>

<div class="ub" style="left:584px;width:48px"></div>
<div class="ub" style="left:637px;width:40px"></div>
<div class="ub" style="left:735px;width:40px"></div>
<div class="ub" style="left:784px;width:40px"></div>
<div class="ub" style="left:833px;width:40px"></div>
<div class="ub" style="left:882px;width:40px"></div>
<div class="ub" style="left:931px;width:40px"></div>
<div class="ub" style="left:980px;width:40px"></div>

<!-- tray -->
<svg style="left:1653px;top:1056px" width="13" height="8" viewBox="0 0 13 8"><path d="M1 7 6.500 1.500 12 7" fill="none" stroke="#fff" stroke-width="1.200"/></svg>
<svg style="left:1677px;top:1051px" width="13" height="17" viewBox="0 0 13 17"><rect x=".5" y="5.500" width="7.500" height="7" rx="1" fill="none" stroke="#fff"/><path d="M8.500 8 12.500 6V12L8.500 10" fill="none" stroke="#fff"/><path d="M2 3C4 1.500 7 1.500 9 3M2 15C4 16.500 7 16.500 9 15" fill="none" stroke="#aaa"/></svg>
<svg style="left:1699px;top:1053px" width="17" height="15" viewBox="0 0 17 15"><path d="M3 11C1 11 0 9.500 0 8S1 5.500 2 5C3 2.500 5 1 7 1 9.500 1 10.500 3 11 5H12V11Z" fill="#9d9d9d"/><circle cx="12" cy="10" r="4.500" fill="#2a9df4"/><rect x="11.400" y="9" width="1.300" height="3.500" fill="#fff"/><rect x="11.400" y="7" width="1.300" height="1.300" fill="#fff"/></svg>
<svg style="left:1723px;top:1053px" width="16" height="14" viewBox="0 0 16 14"><rect x="2.500" y=".5" width="13" height="9.500" fill="none" stroke="#fff"/><rect x="1" y="1.500" width="3" height="3" fill="#101010" stroke="#fff"/><path d="M9 10V13M5 13.500H13" stroke="#fff"/></svg>
<svg style="left:1747px;top:1054px" width="17" height="14" viewBox="0 0 17 14"><path d="M.5 4H3L7 1V11L3 8H.5Z" fill="none" stroke="#fff"/><circle cx="12.500" cy="9.500" r="4" fill="#e2231a"/><path d="M11 8 14 11M14 8 11 11" stroke="#fff"/></svg>
<div class="t c" style="left:1784px;top:1052px;color:#fff">ENG</div>
<div class="t c" style="left:1835px;top:1042px;color:#fff">5:25 PM</div>
<div class="t c s2" style="left:1835px;top:1060px;color:#fff">9/15/2025</div>
<svg style="left:1879px;top:1052px" width="16" height="15" viewBox="0 0 16 15"><path d="M0 0H16V11H8L5 14V11H0Z" fill="#fff"/><path d="M3 3h10M3 5.500h10M3 8h7" stroke="#222"/></svg>
<div class="a" style="left:1887px;top:1059px;width:17px;height:17px;border-radius:50%;background:#2b2b2b;border:1px solid #777;color:#fff;font:bold 11px/15px 'Liberation Sans',sans-serif;text-align:center">3</div>
<div class="a" style="left:1915px;top:1040px;width:1px;height:40px;background:#555"></div>
</body></html>
